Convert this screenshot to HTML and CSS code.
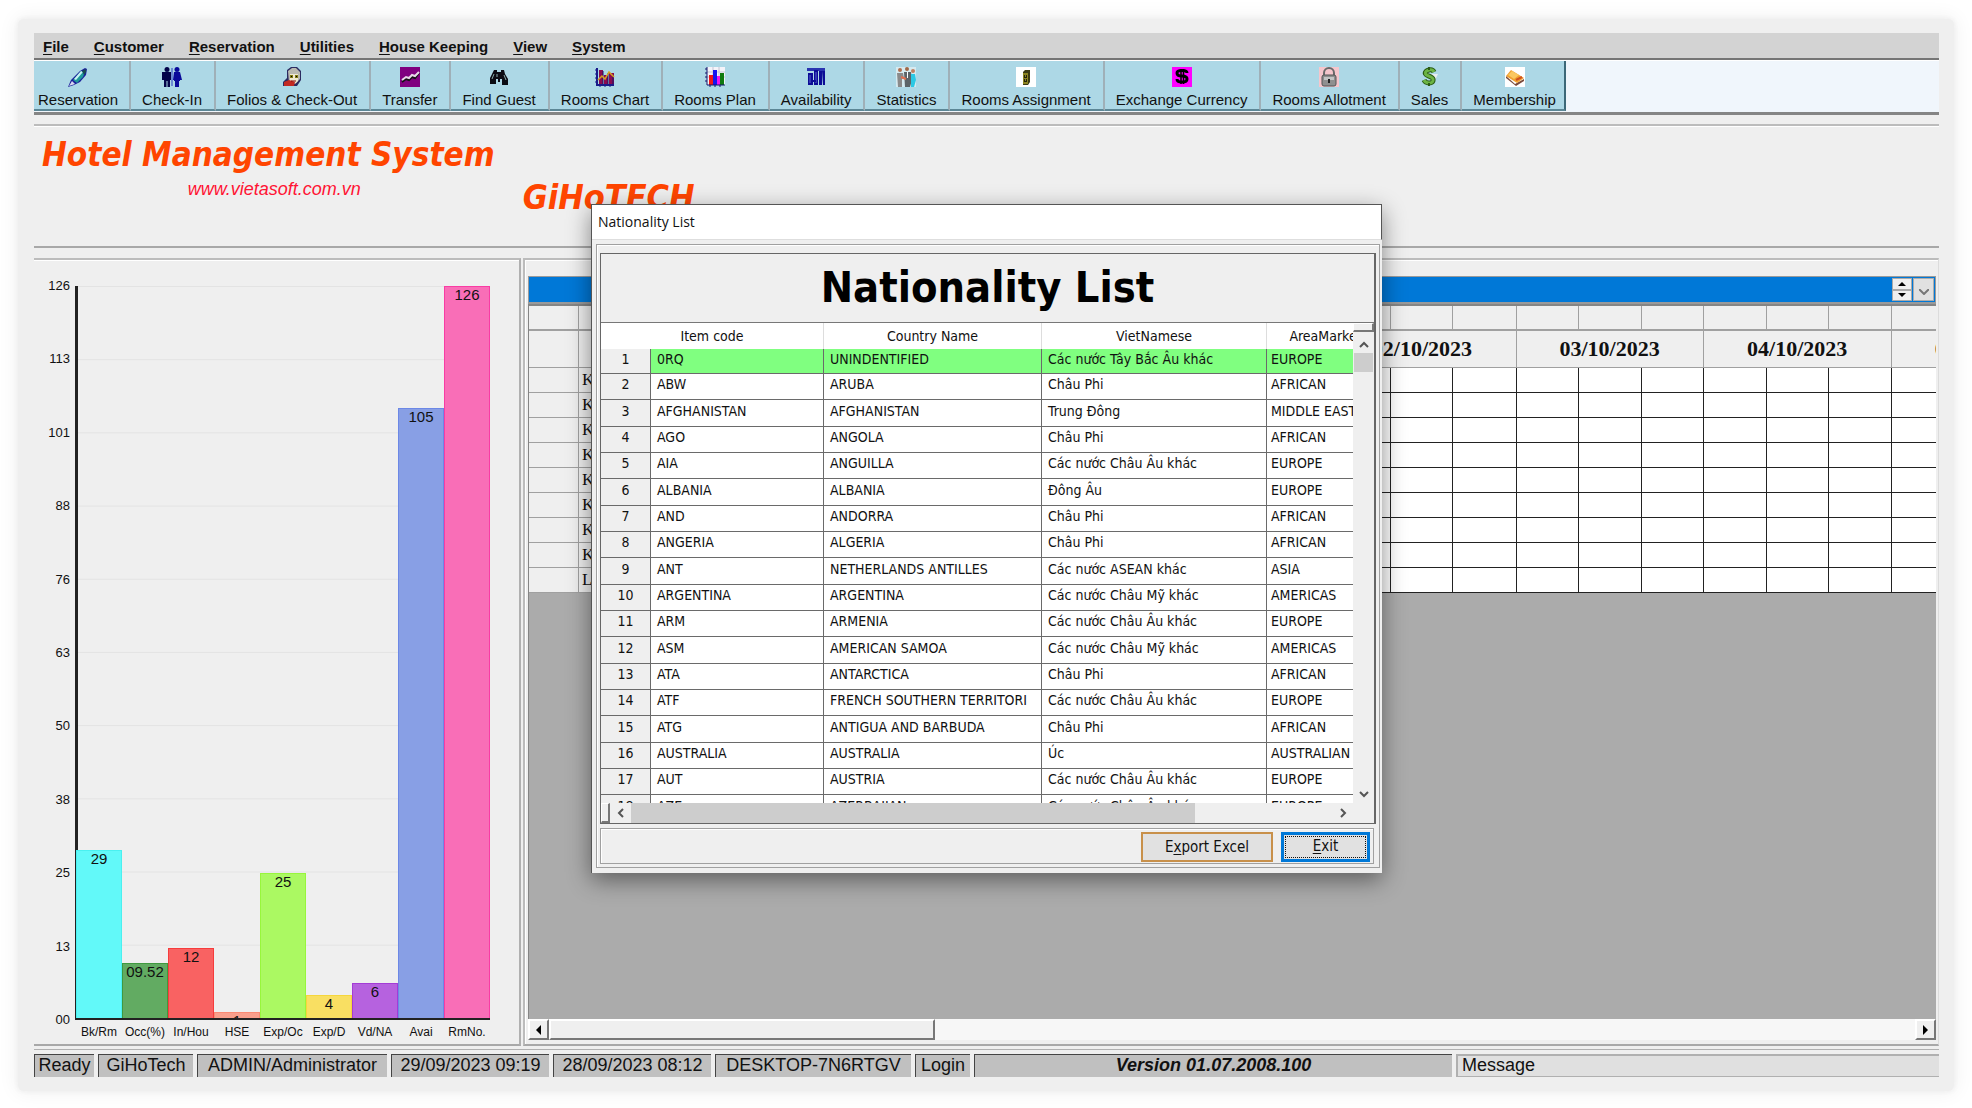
FILE: index.html
```html
<!DOCTYPE html>
<html lang="en">
<head>
<meta charset="utf-8">
<title>Hotel Management System</title>
<link rel="stylesheet" href="styles.css">
</head>
<body>
<div class="app">
  <nav class="menubar" aria-label="Main menu">
    <button><u>F</u>ile</button>
    <button><u>C</u>ustomer</button>
    <button><u>R</u>eservation</button>
    <button><u>U</u>tilities</button>
    <button><u>H</u>ouse Keeping</button>
    <button><u>V</u>iew</button>
    <button><u>S</u>ystem</button>
  </nav>

  <div class="toolbar" role="toolbar" aria-label="Shortcuts">
    <button class="tool">
      <svg class="icon" viewBox="0 0 20 20"><path d="M0 20l3-7 9-9 5-3 2 1-1 6-6 7-6 3z" fill="#1b1f9a"/><path d="M5 13l8-9 4 1-2 5-6 6z" fill="#1f9a9a"/><path d="M6 12l7-8 2 1-7 8z" fill="#c8f4f4"/><path d="M1 19l3-5 3 3z" fill="#d8d8f0"/><path d="M14 4l4-2v3l-2 3z" fill="#1a4a50"/></svg>
      Reservation</button>
    <button class="tool">
      <svg class="icon" viewBox="0 0 20 20"><g fill="#04044a"><circle cx="5" cy="2.500" r="2.500"/><path d="M0 5h9v8H8v7H5.500v-6h-1v6H2v-7H0z"/></g><path d="M10 1v18" stroke="#2a3cc0" stroke-width="1"/><g fill="#0a0a9a"><circle cx="15" cy="2.500" r="2.500"/><path d="M12 5h6l2 8h-2v1h-1v6h-4v-6h-1v-1h-1z"/></g></svg>
      Check-In</button>
    <button class="tool">
      <svg class="icon" viewBox="0 0 20 20"><path d="M5 3l4-3h6l4 4v9l-4 6H1v-4l4-4z" fill="#2b2b60"/><path d="M6 4l4-3h4l4 4v7l-4 4H7z" fill="#b9b9b0"/><path d="M8 7h8v7l-3 3-5-3z" fill="#efe9d0"/><path d="M8 8h3v3H8zM13 8h3v3h-3z" fill="#807a10"/><path d="M9 9h1v1H9zM14 9h1v1h-1z" fill="#000"/><path d="M2 15l5-2 6 2-1 4H2z" fill="#c22a22"/><path d="M9 14h5" stroke="#800"/></svg>
      Folios &amp; Check-Out</button>
    <button class="tool">
      <svg class="icon" viewBox="0 0 20 20"><path d="M0 0h20v20H0z" fill="#800080"/><path d="M2 15l4-3 3 1 3-3 3 1 4-5" fill="none" stroke="#111" stroke-width="2"/><path d="M2 13l4-3 3 1 3-3 3 1 4-4" fill="none" stroke="#e8d8e8" stroke-width="2"/></svg>
      Transfer</button>
    <button class="tool">
      <svg class="icon" viewBox="0 0 20 20"><path d="M5 3h3v2h4V3h3l1 4 3 5v6h-6v-6h-2v3H9v-3H7v5H1v-6l3-6z" fill="#0c0c14"/><path d="M5 7l-2 5M15 8l2 5M8 7v3" stroke="#8aa" stroke-width="1"/></svg>
      Find Guest</button>
    <button class="tool">
      <svg class="icon" viewBox="0 0 20 20"><path d="M2 1v17h17" fill="none" stroke="#1a1a8a" stroke-width="2"/><path d="M0 3h2M0 7h2M0 11h2M0 15h2M5 18v2M10 18v2M15 18v2" stroke="#1a1a8a"/><path d="M4 3h4v14H4zM9 8h4v9H9zM14 6h5v11h-5z" fill="#8a0a50"/><path d="M8 4v13M13 6v11M18 8v9" stroke="#14146a"/><path d="M3 13l4-4 3 3 4-7 5 5" fill="none" stroke="#d8a020" stroke-width="1.500"/></svg>
      Rooms Chart</button>
    <button class="tool">
      <svg class="icon" viewBox="0 0 20 20"><path d="M2 0h18v18H2z" fill="#f4f4fa"/><path d="M2 5h18M2 10h18M8 0v18M14 0v18" stroke="#c4c4d4"/><path d="M4 8h4v10H4z" fill="#f01818"/><path d="M8 3h4v15H8z" fill="#1414f0"/><path d="M12 9h3v9h-3z" fill="#f014f0"/><path d="M15 6h4v12h-4z" fill="#107a10"/><path d="M2 0v18h18" fill="none" stroke="#14146a"/><path d="M0 2h2M0 6h2M0 10h2M0 14h2M5 18v2M10 18v2M15 18v2" stroke="#14146a"/></svg>
      Rooms Plan</button>
    <button class="tool">
      <svg class="icon" viewBox="0 0 20 20"><path d="M1 1h18v3H1z" fill="#2a34b0"/><path d="M2 6h5v12H2zM8 3h4v15H8zM13 4h3v14h-3zM16 4h3v14h-2z" fill="#0c0c96"/><path d="M4 8v8M10 5v11" stroke="#5a62d0"/><path d="M6 14h4" stroke="#0c0c96" stroke-width="2"/></svg>
      Availability</button>
    <button class="tool">
      <svg class="icon" viewBox="0 0 20 20"><path d="M0 0h20v20H0z" fill="#d6eaf0"/><circle cx="4" cy="3" r="2" fill="#b07050"/><path d="M1 6h6l1 5-2 1v8H2z" fill="#8a8a8a"/><circle cx="11" cy="2" r="2" fill="#a06848"/><path d="M8 5h7l1 8-2 7H9z" fill="#5c6468"/><path d="M11 5h1v6h-1z" fill="#fff"/><circle cx="17" cy="4" r="2" fill="#c08060"/><path d="M15 7h4l1 6-2 7h-3z" fill="#2cc8e4"/><path d="M5 10l5 2" stroke="#e07050" stroke-width="2"/></svg>
      Statistics</button>
    <button class="tool">
      <svg class="icon" viewBox="0 0 20 20"><path d="M0 0h20v20H0z" fill="#fff"/><path d="M7 5l2-2h5v12l-2 3H7z" fill="#3c3a14"/><path d="M7 6h5v11H7z" fill="#8c8420"/><path d="M8 8h3v3H8zM8 12h3v3H8z" fill="#26240a"/><path d="M9 9h1M9 13h1" stroke="#e0d860"/></svg>
      Rooms Assignment</button>
    <button class="tool">
      <svg class="icon" viewBox="0 0 20 20"><path d="M0 0h20v20H0z" fill="#f0f"/><path d="M15 6c0-2-2-2.500-5-2.500S5 4 5 6s2 3 5 3 5 1 5 3-2 3-5 3-5-1-5-3" fill="none" stroke="#000" stroke-width="3"/><path d="M9 2v15M11.500 2v15" fill="none" stroke="#000" stroke-width="1.500"/></svg>
      Exchange Currency</button>
    <button class="tool">
      <svg class="icon" viewBox="0 0 20 20"><path d="M0 0h20v20H0z" fill="#f6c6cc"/><path d="M5 10V6a5 5 0 0 1 10 0v4" fill="none" stroke="#6a6a6a" stroke-width="2"/><rect x="3" y="8" width="14" height="11" rx="2" fill="#8f8f8f" stroke="#555"/><path d="M5 10h10v3H5z" fill="#c4c4c4"/><path d="M9 12h2v4H9z" fill="#222"/></svg>
      Rooms Allotment</button>
    <button class="tool">
      <svg class="icon" viewBox="0 0 20 20"><path d="M10 7h8l-4 8z" fill="#e8eef0"/><path d="M14 5c-1-2-3-2.500-5-2S4.500 5 5.500 7s7 2.500 7.500 5-1 4-4 4-4-1-5-3" fill="none" stroke="#2a5c14" stroke-width="5"/><path d="M14 5c-1-2-3-2.500-5-2S4.500 5 5.500 7s7 2.500 7.500 5-1 4-4 4-4-1-5-3" fill="none" stroke="#6cb444" stroke-width="3"/><path d="M9 0v3M9 16v3" stroke="#2a5c14" stroke-width="2"/></svg>
      Sales</button>
    <button class="tool">
      <svg class="icon" viewBox="0 0 20 20"><path d="M0 0h20v20H0z" fill="#fff"/><path d="M1 9l9 8 9-5v2l-8 5L1 11z" fill="#7a4a3a"/><path d="M1 9l5-6 13 8-7 5z" fill="#f0a030"/><path d="M3 8l4-4 7 4-5 4z" fill="#fbc860"/><path d="M11 13l6-3" stroke="#d05020" stroke-width="2"/></svg>
      Membership</button>
  </div>

  <header class="banner">
    <div class="brand">
      <h1>Hotel Management System</h1>
      <a href="#">www.vietasoft.com.vn</a>
    </div>
    <strong class="company">GiHoTECH</strong>
  </header>

  <main class="work">
    <section class="chart" aria-label="Room figures">
      <div class="scale">
        <span>126</span><span>113</span><span>101</span><span>88</span><span>76</span><span>63</span><span>50</span><span>38</span><span>25</span><span>13</span><span>00</span>
      </div>
      <div class="plot">
        <div class="bar cyan" style="height:23%">29</div>
        <div class="bar green" style="height:7.560%">09.52</div>
        <div class="bar red" style="height:9.520%">12</div>
        <div class="bar salmon" style="height:0.790%">1</div>
        <div class="bar lime" style="height:19.800%">25</div>
        <div class="bar gold" style="height:3.170%">4</div>
        <div class="bar violet" style="height:4.760%">6</div>
        <div class="bar blue" style="height:83.300%">105</div>
        <div class="bar pink" style="height:100%">126</div>
      </div>
      <div class="names">
        <span>Bk/Rm</span><span>Occ(%)</span><span>In/Hou</span><span>HSE</span><span>Exp/Oc</span><span>Exp/D</span><span>Vd/NA</span><span>Avai</span><span>RmNo.</span>
      </div>
    </section>

    <section class="planner" aria-label="Rooms plan">
      <div class="caption">
        <div class="spinner">
          <button aria-label="Previous"><svg viewBox="0 0 8 4"><path d="M0 4l4-4 4 4z"/></svg></button>
          <button aria-label="Next"><svg viewBox="0 0 8 4"><path d="M0 0l4 4 4-4z"/></svg></button>
        </div>
        <button class="drop" aria-label="Open list"><svg viewBox="0 0 10 6"><path d="M0 0l5 5 5-5" fill="none" stroke="#777" stroke-width="2"/></svg></button>
      </div>
      <div class="sheet">
        <table class="days">
          <colgroup><col class="c-mark"><col class="c-room"></colgroup>
          <colgroup><col class="c-a"><col class="c-b"><col class="c-a"></colgroup>
          <colgroup><col class="c-b"><col class="c-a"><col class="c-b"></colgroup>
          <colgroup><col class="c-a"><col class="c-b"><col class="c-a"></colgroup>
          <colgroup><col class="c-b"><col class="c-a"><col class="c-b"></colgroup>
          <colgroup><col class="c-a"><col class="c-b"><col class="c-a"></colgroup>
          <colgroup><col class="c-b"><col class="c-a"><col class="c-b"></colgroup>
          <colgroup><col class="c-a"><col class="c-b"><col class="c-a"></colgroup>
          <thead>
            <tr class="top"><td></td><td></td><td></td><td></td><td></td><td></td><td></td><td></td><td></td><td></td><td></td><td></td><td></td><td></td><td></td><td></td><td></td><td></td><td></td><td></td><td></td><td></td><td></td></tr>
            <tr class="dates"><td></td><td></td><th colspan="3">29/09/2023</th><th colspan="3">30/09/2023</th><th colspan="3">01/10/2023</th><th colspan="3">02/10/2023</th><th colspan="3">03/10/2023</th><th colspan="3">04/10/2023</th><th colspan="3">05/10/2023</th></tr>
          </thead>
          <tbody>
            <tr><th></th><th>K</th><td></td><td></td><td></td><td></td><td></td><td></td><td></td><td></td><td></td><td></td><td></td><td></td><td></td><td></td><td></td><td></td><td></td><td></td><td></td><td></td><td></td></tr>
            <tr><th></th><th>K</th><td></td><td></td><td></td><td></td><td></td><td></td><td></td><td></td><td></td><td></td><td></td><td></td><td></td><td></td><td></td><td></td><td></td><td></td><td></td><td></td><td></td></tr>
            <tr><th></th><th>K</th><td></td><td></td><td></td><td></td><td></td><td></td><td></td><td></td><td></td><td></td><td></td><td></td><td></td><td></td><td></td><td></td><td></td><td></td><td></td><td></td><td></td></tr>
            <tr><th></th><th>K</th><td></td><td></td><td></td><td></td><td></td><td></td><td></td><td></td><td></td><td></td><td></td><td></td><td></td><td></td><td></td><td></td><td></td><td></td><td></td><td></td><td></td></tr>
            <tr><th></th><th>K</th><td></td><td></td><td></td><td></td><td></td><td></td><td></td><td></td><td></td><td></td><td></td><td></td><td></td><td></td><td></td><td></td><td></td><td></td><td></td><td></td><td></td></tr>
            <tr><th></th><th>K</th><td></td><td></td><td></td><td></td><td></td><td></td><td></td><td></td><td></td><td></td><td></td><td></td><td></td><td></td><td></td><td></td><td></td><td></td><td></td><td></td><td></td></tr>
            <tr><th></th><th>K</th><td></td><td></td><td></td><td></td><td></td><td></td><td></td><td></td><td></td><td></td><td></td><td></td><td></td><td></td><td></td><td></td><td></td><td></td><td></td><td></td><td></td></tr>
            <tr><th></th><th>K</th><td></td><td></td><td></td><td></td><td></td><td></td><td></td><td></td><td></td><td></td><td></td><td></td><td></td><td></td><td></td><td></td><td></td><td></td><td></td><td></td><td></td></tr>
            <tr><th></th><th>Lo</th><td></td><td></td><td></td><td></td><td></td><td></td><td></td><td></td><td></td><td></td><td></td><td></td><td></td><td></td><td></td><td></td><td></td><td></td><td></td><td></td><td></td></tr>
          </tbody>
        </table>
      </div>
      <div class="hbar">
        <button class="raised" aria-label="Scroll left"><svg viewBox="0 0 5 10"><path d="M5 0v10L0 5z"/></svg></button>
        <div class="raised grip"></div>
        <button class="raised last" aria-label="Scroll right"><svg viewBox="0 0 5 10"><path d="M0 0v10l5-5z"/></svg></button>
      </div>
    </section>
  </main>

  <footer class="status">
    <span class="s-ready">Ready</span>
    <span class="s-site">GiHoTech</span>
    <span class="s-user">ADMIN/Administrator</span>
    <span class="s-date">29/09/2023 09:19</span>
    <span class="s-date">28/09/2023 08:12</span>
    <span class="s-host">DESKTOP-7N6RTGV</span>
    <span class="s-login">Login</span>
    <span class="s-version">Version 01.07.2008.100</span>
    <span class="s-message">Message</span>
  </footer>
</div>

<div class="dialog" role="dialog" aria-label="Nationality List">
  <div class="titlebar">Nationality List</div>
  <div class="frame">
    <div class="panel">
      <h2>Nationality List</h2>
      <div class="viewport">
        <div class="clip">
          <table class="list">
            <colgroup><col class="l-num"><col class="l-code"><col class="l-name"><col class="l-viet"><col class="l-area"></colgroup>
            <thead><tr><th colspan="2">Item code</th><th>Country Name</th><th>VietNamese</th><th>AreaMarket</th></tr></thead>
            <tbody>
              <tr class="selected"><th>1</th><td>0RQ</td><td>UNINDENTIFIED</td><td>Các nước Tây Bắc Âu khác</td><td>EUROPE</td></tr>
              <tr><th>2</th><td>ABW</td><td>ARUBA</td><td>Châu Phi</td><td>AFRICAN</td></tr>
              <tr><th>3</th><td>AFGHANISTAN</td><td>AFGHANISTAN</td><td>Trung Đông</td><td>MIDDLE EAST</td></tr>
              <tr><th>4</th><td>AGO</td><td>ANGOLA</td><td>Châu Phi</td><td>AFRICAN</td></tr>
              <tr><th>5</th><td>AIA</td><td>ANGUILLA</td><td>Các nước Châu Âu khác</td><td>EUROPE</td></tr>
              <tr><th>6</th><td>ALBANIA</td><td>ALBANIA</td><td>Đông Âu</td><td>EUROPE</td></tr>
              <tr><th>7</th><td>AND</td><td>ANDORRA</td><td>Châu Phi</td><td>AFRICAN</td></tr>
              <tr><th>8</th><td>ANGERIA</td><td>ALGERIA</td><td>Châu Phi</td><td>AFRICAN</td></tr>
              <tr><th>9</th><td>ANT</td><td>NETHERLANDS ANTILLES</td><td>Các nước ASEAN khác</td><td>ASIA</td></tr>
              <tr><th>10</th><td>ARGENTINA</td><td>ARGENTINA</td><td>Các nước Châu Mỹ khác</td><td>AMERICAS</td></tr>
              <tr><th>11</th><td>ARM</td><td>ARMENIA</td><td>Các nước Châu Âu khác</td><td>EUROPE</td></tr>
              <tr><th>12</th><td>ASM</td><td>AMERICAN SAMOA</td><td>Các nước Châu Mỹ khác</td><td>AMERICAS</td></tr>
              <tr><th>13</th><td>ATA</td><td>ANTARCTICA</td><td>Châu Phi</td><td>AFRICAN</td></tr>
              <tr><th>14</th><td>ATF</td><td>FRENCH SOUTHERN TERRITORI</td><td>Các nước Châu Âu khác</td><td>EUROPE</td></tr>
              <tr><th>15</th><td>ATG</td><td>ANTIGUA AND BARBUDA</td><td>Châu Phi</td><td>AFRICAN</td></tr>
              <tr><th>16</th><td>AUSTRALIA</td><td>AUSTRALIA</td><td>Úc</td><td>AUSTRALIAN</td></tr>
              <tr><th>17</th><td>AUT</td><td>AUSTRIA</td><td>Các nước Châu Âu khác</td><td>EUROPE</td></tr>
              <tr><th>18</th><td>AZE</td><td>AZERBAIJAN</td><td>Các nước Châu Âu khác</td><td>EUROPE</td></tr>
            </tbody>
          </table>
        </div>
        <div class="vscroll">
          <div class="split"></div>
          <button aria-label="Scroll up"><svg viewBox="0 0 10 7"><path d="M1 6l4-4 4 4"/></svg></button>
          <div class="vthumb"></div>
          <button class="last" aria-label="Scroll down"><svg viewBox="0 0 10 7"><path d="M1 1l4 4 4-4"/></svg></button>
        </div>
      </div>
      <div class="hscroll">
        <div class="split"></div>
        <button aria-label="Scroll left"><svg viewBox="0 0 7 10"><path d="M6 1L2 5l4 4"/></svg></button>
        <div class="hthumb"></div>
        <button class="last" aria-label="Scroll right"><svg viewBox="0 0 7 10"><path d="M1 1l4 4-4 4"/></svg></button>
      </div>
    </div>
    <div class="actions">
      <button class="export">E<u>x</u>port Excel</button>
      <button class="exit"><span><u>E</u>xit</span></button>
    </div>
  </div>
</div>
</body>
</html>
```

FILE: styles.css
```css
* { box-sizing: border-box; }

body {
  margin: 0;
  min-height: 100vh;
  display: flex;
  padding: 19px 18px;
  background: #fff;
  color: #111;
  font-family: "Liberation Sans", Arial, sans-serif;
  font-size: 15px;
}

button {
  margin: 0;
  padding: 0;
  border: 0;
  background: none;
  color: inherit;
  font: inherit;
}

table { border-collapse: separate; border-spacing: 0; table-layout: fixed; }
th, td { padding: 0; font-weight: normal; text-align: left; }
u { text-underline-offset: 2px; }

.app {
  flex: 1;
  min-width: 0;
  display: flex;
  flex-direction: column;
  padding: 14px 15px 14px 16px;
  border-radius: 6px;
  background: #efefef;
  box-shadow: 0 0 4px 1px #efefef, 0 0 20px 2px rgba(0, 0, 0, 0.06);
}

/* Menu */
.menubar {
  display: flex;
  gap: 25px;
  height: 28px;
  padding: 0 9px;
  background: #d3d3d3;
  border-bottom: 1px solid #fff;
  box-shadow: inset 0 -2px #757575;
  font-weight: bold;
}

/* Icon toolbar */
.toolbar {
  display: flex;
  height: 54px;
  background: #f0f6fc;
  border-bottom: 3px solid #858585;
}
.tool {
  display: flex;
  flex-direction: column;
  align-items: center;
  height: 50px;
  padding: 6px 12px 0 11px;
  background: #add8e6;
  border-right: 2px solid #9fb0b8;
  border-bottom: 2px solid #5c8796;
  line-height: 16px;
  white-space: nowrap;
}
.tool:first-child { padding-right: 11px; padding-left: 4px; }
.tool:last-child { padding-right: 8px; border-right-color: #3c6878; }
.icon { width: 20px; height: 20px; margin-bottom: 5px; }

/* Product banner */
.banner {
  display: flex;
  gap: 28px;
  height: 124px;
  margin-top: 9px;
  padding-left: 8px;
  border-top: 2px solid #bcbcbc;
  border-bottom: 2px solid #a8a8a8;
  box-shadow: inset 0 1px #fff;
  color: #ff4500;
  font-family: "DejaVu Sans Condensed", "DejaVu Sans", sans-serif;
}
.brand { display: flex; flex-direction: column; align-items: center; }
h1, .company { margin: 0; font-size: 33px; font-weight: bold; font-style: italic; line-height: 40px; }
h1 { padding-top: 9px; }
.brand a {
  padding-left: 12px;
  color: #ff1434;
  font-family: "Liberation Sans", Arial, sans-serif;
  font-size: 18px;
  font-style: italic;
  line-height: 28px;
  text-decoration: none;
}
.company { padding-top: 51px; font-size: 34px; }

.work { flex: 1; display: flex; gap: 2px; margin-top: 10px; }

/* Bar chart */
.chart {
  flex: none;
  display: grid;
  grid-template: 734px 24px / 36px 414px;
  align-content: start;
  column-gap: 6px;
  width: 487px;
  padding-top: 26px;
  border-top: 2px solid #bcbcbc;
  border-right: 2px solid #b0b0b0;
  border-bottom: 2px solid #a8a8a8;
  box-shadow: inset 0 1px #fff;
  font-size: 13px;
}
.scale {
  display: flex;
  flex-direction: column;
  justify-content: space-between;
  margin: -7px 0;
  line-height: 14px;
  text-align: right;
}
.plot {
  display: flex;
  align-items: flex-end;
  border-bottom: 2px solid #222;
  background: linear-gradient(#e3e3e3 1px, transparent 1px) 0 0 / 100% 10%;
  box-shadow: -1px 0 #222, inset 2px 0 #222;
}
.bar {
  flex: 1;
  min-width: 0;
  overflow: hidden;
  border: 1px solid;
  border-bottom: 0;
  color: #111;
  font-size: 15px;
  line-height: 16px;
  text-align: center;
  white-space: nowrap;
}
.cyan { background: #62f9f9; border-color: #4af0f0; }
.green { background: #62ab62; border-color: #3f993f; }
.red { background: #f96262; border-color: #f63c3c; }
.salmon { background: #f99f8c; border-color: #f98a74; }
.lime { background: #abf962; border-color: #98f63c; }
.gold { background: #f9df62; border-color: #f6d63c; }
.violet { background: #b662df; border-color: #a43cd6; }
.blue { background: #889fe5; border-color: #6c88e6; }
.pink { background: #f96eb7; border-color: #f93ca4; }
.names {
  grid-column: 2;
  display: grid;
  grid-template-columns: repeat(9, 1fr);
  font-size: 12px;
  line-height: 24px;
  text-align: center;
}

/* Room planner */
.planner {
  flex: 1;
  min-width: 0;
  display: flex;
  flex-direction: column;
  padding: 16px 2px 4px 3px;
  border: 2px solid #bcbcbc;
  border-width: 2px 1px 2px 2px;
  border-right-color: #dcdcdc;
  border-bottom-color: #a8a8a8;
  box-shadow: inset 1px 1px #fff;
}
.caption {
  display: flex;
  justify-content: flex-end;
  gap: 1px;
  height: 28px;
  padding: 1px;
  background: #0078d7;
  border: 1px solid #9a9a9a;
  border-bottom-width: 2px;
}
.spinner { display: flex; flex-direction: column; width: 20px; background: #efefef; }
.spinner button { flex: 1; display: grid; place-items: center; border: 1px solid #aaa; }
.spinner svg { width: 8px; height: 4px; }
.drop { width: 21px; background: #e1e1e1; border: 1px solid #adadad; }
.drop svg { width: 10px; height: 6px; }
.sheet {
  flex: 1;
  overflow: hidden;
  background: #ababab;
  border-top: 2px solid #858585;
  border-left: 1px solid #858585;
}
.days { width: 1550px; font-family: "Liberation Serif", "Times New Roman", serif; }
.c-mark { width: 50px; }
.c-room { width: 187px; }
.c-a { width: 62px; }
.c-b { width: 63px; }
.days th, .days td { height: 25px; border-right: 1px solid #a0a0a0; border-bottom: 1px solid #a0a0a0; }
.days .top td { border-bottom-width: 2px; }
.days thead { background: #efefef; }
.days .dates th, .days .dates td { height: 37px; }
.days .dates th { font-size: 22px; font-weight: bold; text-align: center; }
.days tbody th { padding-left: 3px; background: #efefef; font-size: 17px; line-height: 20px; }
.days tbody td { background: #fff; border-color: #222; }

.hbar {
  display: flex;
  height: 21px;
  background: #f7f7f7;
}
.raised {
  width: 21px;
  background: #efefef;
  border: 2px solid #fff;
  border-right-color: #777;
  border-bottom-color: #777;
}
.raised svg { width: 5px; height: 10px; }
.grip { width: 386px; }
.last { margin-left: auto; }

/* Status bar */
.status {
  display: flex;
  gap: 4px;
  height: 28px;
  margin-top: 3px;
  padding-top: 4px;
  border-top: 1px solid #b0b0b0;
  font-size: 18px;
  line-height: 21px;
  text-align: center;
  white-space: nowrap;
}
.status span { background: #c0c0c0; border-top: 1px solid #444; border-left: 1px solid #444; }
.s-ready { width: 60px; }
.s-site { width: 95px; }
.s-user { width: 190px; }
.s-date { width: 158px; }
.s-host { width: 196px; }
.s-login { width: 55px; }
.s-version { flex: 1; font-weight: bold; font-style: italic; }
.status .s-message {
  flex: 1;
  padding-left: 4px;
  background: #e0e0e0;
  border: 1px solid #b0b0b0;
  border-width: 2px 0 1px 2px;
  line-height: 19px;
  text-align: left;
}

/* Nationality dialog */
.dialog {
  position: absolute;
  left: 591px;
  top: 204px;
  width: 791px;
  padding-bottom: 5px;
  background: #efefef;
  border-top: 1px solid #555;
  border-left: 1px solid #555;
  box-shadow: 0 7px 22px rgba(0, 0, 0, 0.45);
  font-family: "DejaVu Sans Condensed", "DejaVu Sans", sans-serif;
  font-size: 14px;
}
.titlebar {
  height: 35px;
  padding-left: 6px;
  background: #fff;
  border-bottom: 1px solid #dedede;
  border-right: 1px solid #555;
  font-family: "Open Sans", "Noto Sans", sans-serif;
  line-height: 34px;
}
.frame {
  margin: 4px 2px 0 4px;
  padding: 8px 3px 3px;
  border: 1px solid #a0a0a0;
  box-shadow: inset 1px 1px #fff;
}
.panel { border: 1px solid #666; border-right-width: 2px; }
h2 {
  margin: 0;
  height: 69px;
  border-bottom: 1px solid #777;
  font-size: 43px;
  line-height: 67px;
  text-align: center;
  color: #000;
}
.viewport { display: flex; height: 480px; }
.clip { flex: 1; min-width: 0; overflow: hidden; background: #fff; }
.list { width: 784px; line-height: 16px; }
.l-num { width: 50px; }
.l-code { width: 173px; }
.l-name { width: 218px; }
.l-viet { width: 225px; }
.l-area { width: 118px; }
.list th { text-align: center; }
.list thead th { height: 26px; padding-bottom: 1px; border-right: 1px solid #ddd; }
.list tbody th, .list tbody td {
  height: 26px;
  padding-bottom: 5px;
  border-right: 1px solid #6a6a6a;
  border-bottom: 1px solid #6a6a6a;
  white-space: nowrap;
}
.list tbody tr:nth-child(3n) th, .list tbody tr:nth-child(3n) td { height: 27px; }
.list .selected th, .list .selected td { height: 25px; }
.list tbody th { background: #efefef; }
.list tbody td { padding-left: 6px; }
.list tbody td:last-child { padding-left: 4px; }
.selected td { background: #80ff80; }

.vscroll, .hscroll { display: flex; background: #efefef; }
.vscroll { flex-direction: column; width: 21px; }
.vscroll button { height: 21px; }
.hscroll { height: 20px; padding-right: 20px; }
.hscroll button { width: 21px; }
.vscroll svg, .hscroll svg { fill: none; stroke: #555; stroke-width: 2; }
.vscroll svg { width: 10px; height: 7px; }
.hscroll svg { width: 7px; height: 10px; }
.split { border: 1px solid #fff; border-right: 2px solid #777; border-bottom: 2px solid #777; }
.vscroll .split { height: 9px; }
.hscroll .split { width: 9px; }
.vthumb { height: 19px; margin: 0 1px; background: #cdcdcd; }
.hthumb { width: 564px; background: #cdcdcd; }
.vscroll .last { margin: auto 0 0; }

.actions {
  display: flex;
  justify-content: flex-end;
  gap: 8px;
  height: 36px;
  margin: 4px 2px 0 0;
  padding: 3px 3px 1px;
  border: 1px solid #a0a0a0;
  box-shadow: inset 1px 1px #fff;
  font-size: 15px;
}
.actions button { background: #e1e1e1; }
.export { width: 132px; border: 2px solid #c8904a; }
.actions .exit { width: 89px; padding: 1px; border: 3px solid #0078d7; }
.exit span { display: block; height: 100%; border: 1px dotted #111; line-height: 18px; }
```
